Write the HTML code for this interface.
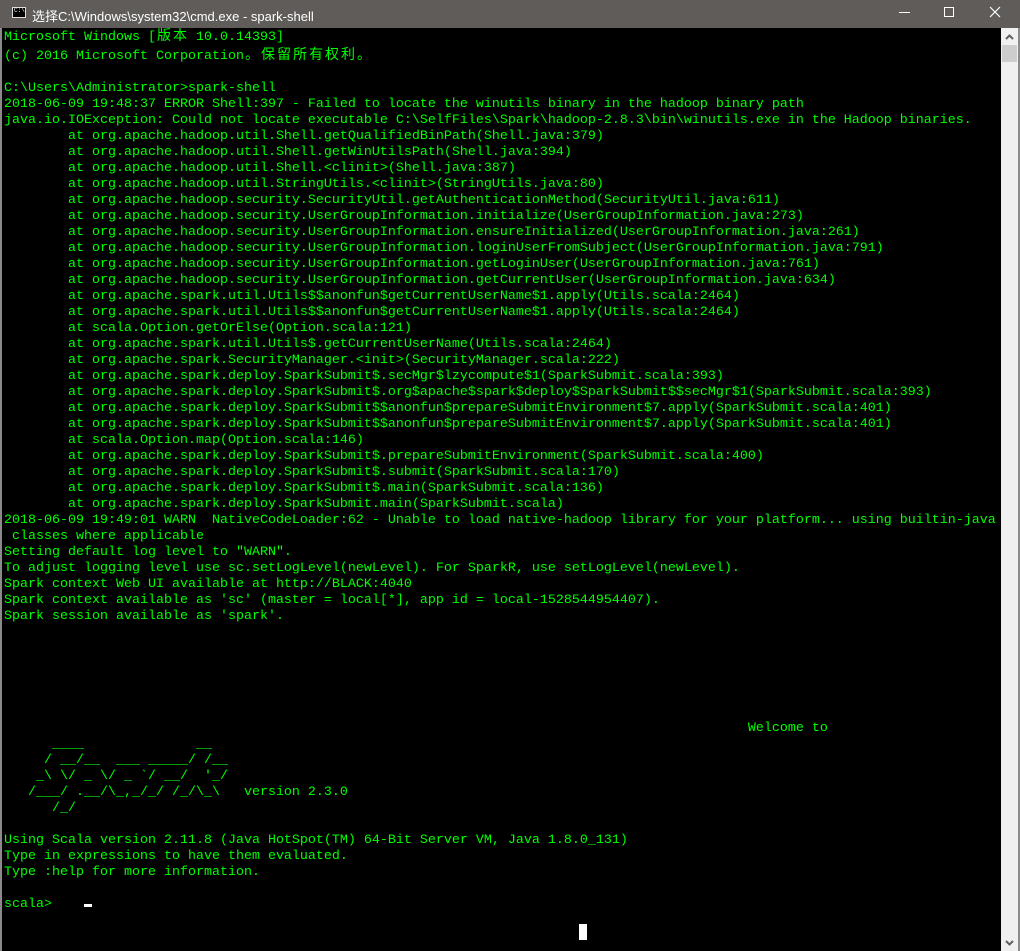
<!DOCTYPE html>
<html><head><meta charset="utf-8"><style>
html,body{margin:0;padding:0;width:1020px;height:951px;overflow:hidden;background:#000}
#tb{position:absolute;left:0;top:0;width:1020px;height:28px;background:#5f5c59;color:#fff;font:13px "Liberation Sans","Noto Sans CJK SC",sans-serif}
#tb .t{position:absolute;left:32px;top:6px}
#tb .ic{position:absolute;left:12px;top:7px;width:14px;height:11px;background:#000;border:1px solid #ddd;box-sizing:border-box}
#tb .ic:after{content:"C:\\";position:absolute;left:1px;top:-1px;font:6px "Liberation Mono",monospace;color:#fff}
#lb{position:absolute;left:0;top:28px;width:2px;height:923px;background:#8a8a8a}
#rb{position:absolute;left:1018px;top:28px;width:2px;height:923px;background:#8a8a8a}
#sb{position:absolute;left:1001px;top:28px;width:17px;height:923px;background:#f0f0f0}
#th{position:absolute;left:1002px;top:45px;width:15px;height:17px;background:#cdcdcd}
pre{position:absolute;left:4px;top:27px;margin:0;font:13.33px/16px "Liberation Mono",monospace;color:#00ff00;white-space:pre}
.c{display:inline-block;width:16px;font-family:"Noto Sans CJK SC",sans-serif;font-size:14px;text-align:center}
.cur{position:absolute;background:#fff}
</style></head><body>
<div id="tb"><div class="ic"></div><div class="t">选择C:\Windows\system32\cmd.exe - spark-shell</div>
<svg style="position:absolute;left:890px;top:0" width="130" height="28">
<line x1="9" y1="12.5" x2="20" y2="12.5" stroke="#fff" stroke-width="1"/>
<rect x="54.5" y="7.5" width="9" height="9" fill="none" stroke="#fff"/>
<path d="M100 7L110 17M110 7L100 17" stroke="#fff" stroke-width="1.2"/>
</svg></div>
<div id="lb"></div><div id="sb"></div><div id="th"></div><div id="rb"></div>
<svg style="position:absolute;left:1001px;top:28px" width="17" height="923">
<path d="M5 11L8.5 7.5L12 11" stroke="#606060" stroke-width="2" fill="none"/>
<path d="M5 913L8.5 916.5L12 913" stroke="#606060" stroke-width="2" fill="none"/>
</svg>
<pre>Microsoft Windows [<span class="c">版</span><span class="c">本</span> 10.0.14393]
(c) 2016 Microsoft Corporation<span class="c">。</span><span class="c">保</span><span class="c">留</span><span class="c">所</span><span class="c">有</span><span class="c">权</span><span class="c">利</span><span class="c">。</span>

C:\Users\Administrator&gt;spark-shell
2018-06-09 19:48:37 ERROR Shell:397 - Failed to locate the winutils binary in the hadoop binary path
java.io.IOException: Could not locate executable C:\SelfFiles\Spark\hadoop-2.8.3\bin\winutils.exe in the Hadoop binaries.
        at org.apache.hadoop.util.Shell.getQualifiedBinPath(Shell.java:379)
        at org.apache.hadoop.util.Shell.getWinUtilsPath(Shell.java:394)
        at org.apache.hadoop.util.Shell.&lt;clinit&gt;(Shell.java:387)
        at org.apache.hadoop.util.StringUtils.&lt;clinit&gt;(StringUtils.java:80)
        at org.apache.hadoop.security.SecurityUtil.getAuthenticationMethod(SecurityUtil.java:611)
        at org.apache.hadoop.security.UserGroupInformation.initialize(UserGroupInformation.java:273)
        at org.apache.hadoop.security.UserGroupInformation.ensureInitialized(UserGroupInformation.java:261)
        at org.apache.hadoop.security.UserGroupInformation.loginUserFromSubject(UserGroupInformation.java:791)
        at org.apache.hadoop.security.UserGroupInformation.getLoginUser(UserGroupInformation.java:761)
        at org.apache.hadoop.security.UserGroupInformation.getCurrentUser(UserGroupInformation.java:634)
        at org.apache.spark.util.Utils$$anonfun$getCurrentUserName$1.apply(Utils.scala:2464)
        at org.apache.spark.util.Utils$$anonfun$getCurrentUserName$1.apply(Utils.scala:2464)
        at scala.Option.getOrElse(Option.scala:121)
        at org.apache.spark.util.Utils$.getCurrentUserName(Utils.scala:2464)
        at org.apache.spark.SecurityManager.&lt;init&gt;(SecurityManager.scala:222)
        at org.apache.spark.deploy.SparkSubmit$.secMgr$lzycompute$1(SparkSubmit.scala:393)
        at org.apache.spark.deploy.SparkSubmit$.org$apache$spark$deploy$SparkSubmit$$secMgr$1(SparkSubmit.scala:393)
        at org.apache.spark.deploy.SparkSubmit$$anonfun$prepareSubmitEnvironment$7.apply(SparkSubmit.scala:401)
        at org.apache.spark.deploy.SparkSubmit$$anonfun$prepareSubmitEnvironment$7.apply(SparkSubmit.scala:401)
        at scala.Option.map(Option.scala:146)
        at org.apache.spark.deploy.SparkSubmit$.prepareSubmitEnvironment(SparkSubmit.scala:400)
        at org.apache.spark.deploy.SparkSubmit$.submit(SparkSubmit.scala:170)
        at org.apache.spark.deploy.SparkSubmit$.main(SparkSubmit.scala:136)
        at org.apache.spark.deploy.SparkSubmit.main(SparkSubmit.scala)
2018-06-09 19:49:01 WARN  NativeCodeLoader:62 - Unable to load native-hadoop library for your platform... using builtin-java
 classes where applicable
Setting default log level to "WARN".
To adjust logging level use sc.setLogLevel(newLevel). For SparkR, use setLogLevel(newLevel).
Spark context Web UI available at http://BLACK:4040
Spark context available as 'sc' (master = local[*], app id = local-1528544954407).
Spark session available as 'spark'.






                                                                                             Welcome to
      ____              __
     / __/__  ___ _____/ /__
    _\ \/ _ \/ _ `/ __/  '_/
   /___/ .__/\_,_/_/ /_/\_\   version 2.3.0
      /_/

Using Scala version 2.11.8 (Java HotSpot(TM) 64-Bit Server VM, Java 1.8.0_131)
Type in expressions to have them evaluated.
Type :help for more information.

scala&gt;</pre>
<div class="cur" style="left:84px;top:904px;width:8px;height:3px"></div>
<div class="cur" style="left:579px;top:924px;width:8px;height:16px"></div>
</body></html>
